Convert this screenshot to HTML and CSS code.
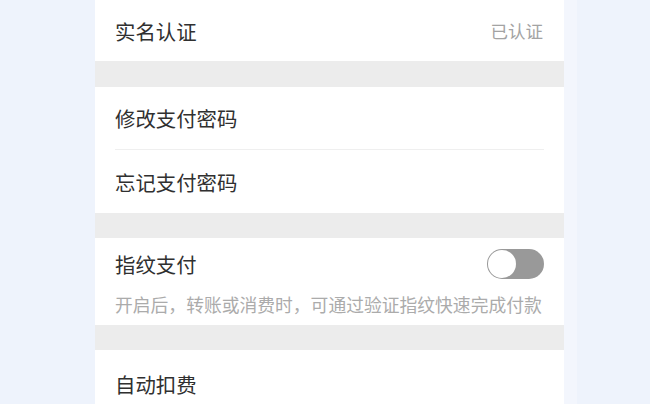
FILE: index.html
```html
<!DOCTYPE html>
<html lang="zh-CN">
<head>
<meta charset="utf-8">
<title>支付设置</title>
<link rel="stylesheet" href="styles.css">
</head>
<body>
<div class="page">
  <main class="panel">
    <section class="group">
      <div class="row">
        <span class="label">实名认证</span>
        <span class="value">已认证</span>
      </div>
    </section>
    <div class="gap"></div>
    <section class="group">
      <div class="row row-divided">
        <span class="label">修改支付密码</span>
      </div>
      <div class="row row-second">
        <span class="label">忘记支付密码</span>
      </div>
    </section>
    <div class="gap gap-short"></div>
    <section class="group">
      <div class="row-tall">
        <div class="row-head">
          <span class="label">指纹支付</span>
          <span class="toggle"><span class="knob"></span></span>
        </div>
        <p class="desc">开启后，转账或消费时，可通过验证指纹快速完成付款</p>
      </div>
    </section>
    <div class="gap gap-short"></div>
    <section class="group">
      <div class="row row-last">
        <span class="label">自动扣费</span>
      </div>
    </section>
  </main>
  <div class="edge"></div>
</div>
</body>
</html>
```

FILE: styles.css
```css
html, body {
  margin: 0;
  padding: 0;
  height: 100%;
  background: #eef3fc;
  overflow: hidden;
}

body {
  font-family: "Noto Sans CJK SC", "Noto Sans", sans-serif;
  color: #333333;
}

.page {
  display: flex;
  height: 404px;
  padding-left: 95px;
}

.panel {
  width: 469px;
  background: #ffffff;
  display: flex;
  flex-direction: column;
}

.edge {
  width: 13px;
  background: #f3f6fd;
}

.group {
  background: #ffffff;
  padding: 0 20px;
}

.gap {
  height: 26px;
  background: #ececec;
  flex: none;
}

.gap-short {
  height: 25px;
}

.row {
  height: 61px;
  display: flex;
  align-items: center;
  justify-content: space-between;
}

.row-divided {
  height: 62px;
  border-bottom: 1px solid #efefef;
}

.row-second {
  height: 63px;
}

.row-last {
  height: 70px;
  align-items: flex-start;
  padding-top: 20px;
  box-sizing: border-box;
}

.label {
  font-size: 20.4px;
  line-height: 28px;
  color: #303030;
}

.value {
  font-size: 17.5px;
  line-height: 24px;
  color: #a3a3a3;
  margin-right: 1px;
}

.row-tall {
  height: 87px;
  display: flex;
  flex-direction: column;
  padding-top: 11px;
  box-sizing: border-box;
}

.row-head {
  display: flex;
  align-items: center;
  justify-content: space-between;
  height: 30px;
}

.toggle {
  width: 57px;
  height: 30px;
  border-radius: 15px;
  background: #999999;
  padding: 1px;
  box-sizing: border-box;
  display: flex;
  align-items: center;
}

.knob {
  width: 28px;
  height: 28px;
  border-radius: 50%;
  background: #ffffff;
}

.desc {
  margin: 12px 0 0 0;
  font-size: 17.8px;
  line-height: 26px;
  color: #ababab;
  white-space: nowrap;
}
```
